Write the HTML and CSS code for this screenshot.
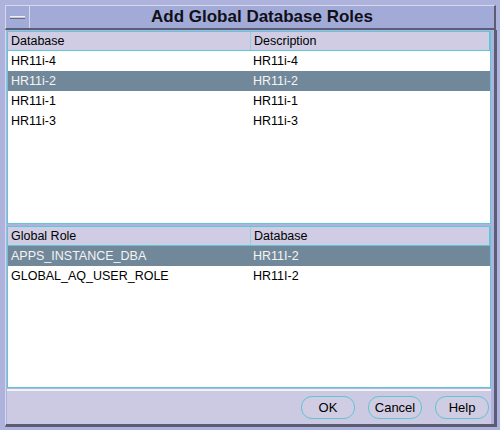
FILE: index.html
```html
<!DOCTYPE html>
<html lang="en">
<head>
  <meta charset="UTF-8" />
  <title>Add Global Database Roles</title>
  <link rel="stylesheet" href="styles.css">
</head>
<body>

<div class="window">
  <!-- barra de titulo -->
  <div class="titlebar">
    <div class="menu-btn"><span class="dash"></span></div>
    <div class="title">Add Global Database Roles</div>
  </div>

  <div class="content">
    <!-- tabela de bancos -->
    <div class="list list-top">
      <div class="row head">
        <div class="cell">Database</div>
        <div class="cell">Description</div>
      </div>
      <div class="row">
        <div class="cell">HR11i-4</div>
        <div class="cell">HR11i-4</div>
      </div>
      <div class="row selected">
        <div class="cell">HR11i-2</div>
        <div class="cell">HR11i-2</div>
      </div>
      <div class="row">
        <div class="cell">HR11i-1</div>
        <div class="cell">HR11i-1</div>
      </div>
      <div class="row">
        <div class="cell">HR11i-3</div>
        <div class="cell">HR11i-3</div>
      </div>
    </div>

    <!-- tabela de papeis -->
    <div class="list list-bottom">
      <div class="row head">
        <div class="cell">Global Role</div>
        <div class="cell">Database</div>
      </div>
      <div class="row selected">
        <div class="cell">APPS_INSTANCE_DBA</div>
        <div class="cell">HR11I-2</div>
      </div>
      <div class="row">
        <div class="cell">GLOBAL_AQ_USER_ROLE</div>
        <div class="cell">HR11I-2</div>
      </div>
    </div>

    <div class="buttons">
      <button>OK</button>
      <button>Cancel</button>
      <button>Help</button>
    </div>
  </div>
</div>

</body>
</html>
```

FILE: styles.css
```css
* {
  margin: 0;
  padding: 0;
  box-sizing: border-box;
  font-family: 'Liberation Sans', Arial, sans-serif;
}

body {
  background: #aeb3de;
  width: 500px;
  height: 430px;
  overflow: hidden;
}

.window {
  width: 500px;
  height: 430px;
  padding: 5px 3px 0 5px;
  background: #aeb3de;
  display: flex;
  flex-direction: column;
}

.titlebar {
  height: 25px;
  display: flex;
  background: #a2abd8;
  border-top: 1px solid #d8d8e8;
  border-left: 1px solid #d8d8e8;
  border-right: 2px solid #5c5c74;
  border-bottom: 2px solid #5c5c74;
  margin-right: 1px;
}

.menu-btn {
  width: 24px;
  border-right: 1px solid #d8d8e8;
  display: flex;
  align-items: center;
  justify-content: center;
}

.dash {
  width: 15px;
  height: 3px;
  background: #c8c8dc;
  border-top: 1px solid #eeeef6;
  border-bottom: 1px solid #6a6a80;
}

.title {
  flex: 1;
  text-align: center;
  font-size: 17px;
  font-weight: bold;
  line-height: 22px;
  color: #101018;
}

.content {
  flex: 1;
  display: flex;
  flex-direction: column;
  border-left: 1px solid #d8d8e8;
  border-right: 3px solid #5c5c74;
  border-bottom: 3px solid #5c5c74;
  margin-bottom: 3px;
  padding: 1px 3px 0 1px;
  background: #aeb3de;
}

.list {
  background: #fff;
  border: 1px solid #5ec6d6;
  border-top: none;
}

.list-top {
  height: 193px;
  margin-bottom: 2px;
}

.list-bottom {
  height: 162px;
}

.row {
  display: grid;
  grid-template-columns: 242px 1fr;
  height: 20px;
  align-items: center;
  font-size: 12.5px;
  color: #000;
}

.cell {
  padding-left: 3px;
  white-space: nowrap;
}

.row.head {
  height: 20px;
  background: #cfcce3;
  border: 1px solid #5ec6d6;
  border-left: none;
}

.row.head .cell + .cell {
  border-left: 1px solid #8fd2dc;
  height: 100%;
  line-height: 18px;
}

.row.selected {
  background: #71889a;
  color: #f4f4f4;
}

.buttons {
  flex: 1;
  background: #ccc9e3;
  border-top: 2px solid #f2f2fa;
  display: flex;
  justify-content: flex-end;
  align-items: flex-start;
  gap: 13px;
  padding: 5px 2px 0 0;
  margin-top: 1px;
}

.buttons button {
  width: 54px;
  height: 23px;
  border: 1px solid #62c4d2;
  border-radius: 11px;
  background: #cfcce3;
  font-size: 13px;
  color: #000;
}
```
